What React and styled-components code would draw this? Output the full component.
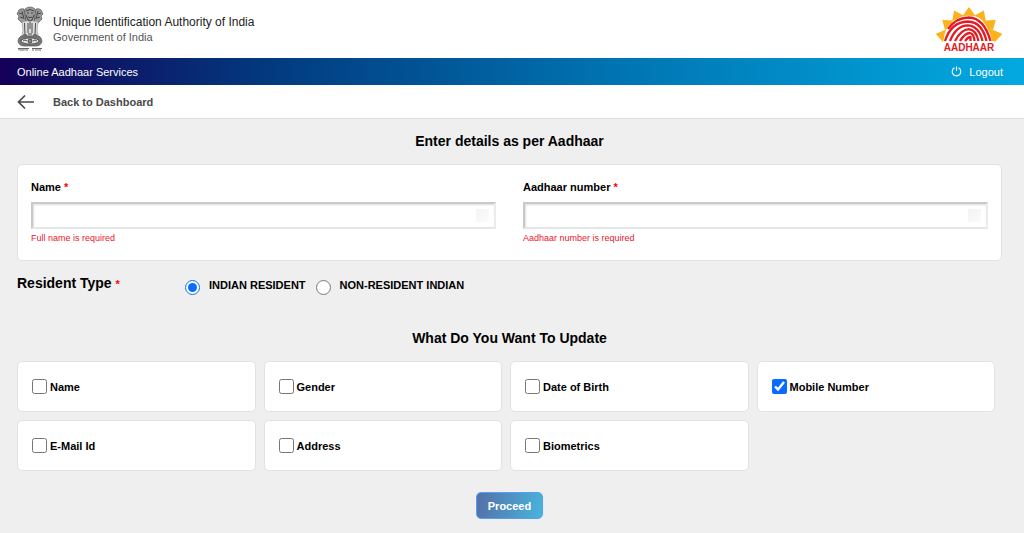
import React, { useState } from "react";
import styled, { createGlobalStyle } from "styled-components";

const updateOptions = [
  { id: "name", label: "Name" },
  { id: "gender", label: "Gender" },
  { id: "dob", label: "Date of Birth" },
  { id: "mobile", label: "Mobile Number" },
  { id: "email", label: "E-Mail Id" },
  { id: "address", label: "Address" },
  { id: "biometrics", label: "Biometrics" },
];

const residentTypes = [
  { id: "indian", label: "INDIAN RESIDENT" },
  { id: "nri", label: "NON-RESIDENT INDIAN" },
];

const rayAngles = [-78, -52, -26, 0, 26, 52, 78];

function Emblem() {
  return (
    <svg width="28" height="46" viewBox="0 0 28 46" aria-hidden="true">
      <g fill="#9a9a9a" stroke="#555" strokeWidth="0.7">
        <path d="M9 3 Q14 -1 19 3 L20 10 L18 16 L10 16 L8 10 Z" />
        <path d="M8 3 Q3 2 2 6 L1 8 L3 10 L2 13 L6 17 L10 17 L9 9 Z" />
        <path d="M20 3 Q25 2 26 6 L27 8 L25 10 L26 13 L22 17 L18 17 L19 9 Z" />
        <path d="M6 16 L10 15 H18 L22 16 L21 24 L22 30 H6 L7 24 Z" fill="#dcdcdc" stroke="#999" />
        <path d="M5 30 Q2 32 2 35 Q3 40 8 40 H20 Q25 40 26 35 Q26 32 23 30 Z" fill="#777" />
      </g>
      <g fill="none" stroke="#3a3a3a" strokeWidth="0.9">
        <path d="M10 5 Q14 2 18 5 M11 7 h2 M15 7 h2 M12 11 q2 1.500 4 0 M10 9 l2 5 l2 1 l2 -1 l2 -5" />
        <path d="M3 7 l3 1 M4 11 l3 1 M6 5 l2 8 M25 7 l-3 1 M24 11 l-3 1 M22 5 l-2 8" />
        <path d="M8.500 17 L9 29 M12 17 V27 M16 17 V27 M19.500 17 L19 29 M14 16 V23" />
        <path d="M7 29 h4 M12 28 h4 M17 29 h4" />
      </g>
      <ellipse cx="14" cy="35" rx="9" ry="3" fill="#e4e4e4" stroke="#444" strokeWidth="0.8" />
      <circle cx="14" cy="35" r="2" fill="#888" stroke="#333" strokeWidth="0.8" />
      <path d="M7 35 q2 -2 4 0 M17 35 q2 -2 4 0" fill="none" stroke="#555" />
      <path
        d="M2 42.500 H13 M16 42.500 H26 M3 43 v1.500 M5 43 v2 M7 43 v2 M9 43 v1.500 M11 43 v2 M17 43 v2 M20 43 v2 M22 43 v1.500 M24 43 v2"
        fill="none"
        stroke="#555"
        strokeWidth="0.9"
      />
    </svg>
  );
}

function AadhaarLogo() {
  return (
    <svg width="66" height="46" viewBox="0 0 66 46" role="img" aria-label="Aadhaar">
      <g fill="#fbb21b">
        {rayAngles.map((angle) => (
          <path
            key={angle}
            transform={`translate(33 35) rotate(${angle})`}
            d="M0 -34 L6.500 -25 Q0 -25.500 -6.500 -25 Z"
          />
        ))}
        <path d="M42 10 Q56 17 60 35 H56 Q53 20 42 10 Z" />
      </g>
      <g fill="none" stroke="#e31b23" strokeWidth="2.300">
        <path d="M12 23 Q20 11.500 33 11.500 Q48 12 54.500 35" />
        <path d="M9 35 Q15 16 32 15.500 Q46 16 50.500 35" />
        <path d="M14 35 Q20 19.500 32 19.300 Q43 20 46.500 35" />
        <path d="M19 35 Q25 23.500 33 23.200 Q40 24 42.500 35" />
        <path d="M24 35 Q29 27 34 27 Q38 28 38.500 35" />
        <path d="M29 35 Q32 31 34.500 31 V35" />
      </g>
      <text
        x="33"
        y="45"
        textAnchor="middle"
        fontFamily="Liberation Sans, Arial, sans-serif"
        fontSize="10"
        fontWeight="bold"
        fill="#e31b23"
      >
        AADHAAR
      </text>
    </svg>
  );
}

function BackArrow() {
  return (
    <svg width="18" height="16" viewBox="0 0 18 16" aria-hidden="true">
      <path
        d="M17 8 H1.500 M8 1.500 L1.500 8 L8 14.500"
        fill="none"
        stroke="#4a4a4a"
        strokeWidth="1.700"
      />
    </svg>
  );
}

function PowerIcon() {
  return (
    <svg width="11" height="11" viewBox="0 0 11 11" aria-hidden="true">
      <path
        d="M3.500 1.800 A4.300 4.300 0 1 0 7.500 1.800 M5.500 0.500 V5"
        fill="none"
        stroke="#fff"
        strokeWidth="1.100"
      />
    </svg>
  );
}

function TextField({ id, label, error, value, onChange }) {
  return (
    <Field>
      <FieldLabel htmlFor={id}>
        {label} <Required>*</Required>
      </FieldLabel>
      <TextInput
        id={id}
        type="text"
        value={value}
        onChange={onChange}
        aria-describedby={`${id}-error`}
      />
      <ErrorText id={`${id}-error`}>{error}</ErrorText>
    </Field>
  );
}

function App() {
  const [details, setDetails] = useState({ fullName: "", aadhaarNumber: "" });
  const [resident, setResident] = useState("indian");
  const [selected, setSelected] = useState(["mobile"]);

  const handleDetailsChange = (e) => {
    const { id, value } = e.target;
    setDetails({ ...details, [id]: value });
  };

  const toggleOption = (id) => {
    setSelected(
      selected.includes(id)
        ? selected.filter((item) => item !== id)
        : [...selected, id]
    );
  };

  const handleSubmit = (e) => {
    e.preventDefault();
  };

  return (
    <>
      <GlobalStyle />
      <Header>
        <Brand>
          <Emblem />
          <div>
            <BrandTitle>Unique Identification Authority of India</BrandTitle>
            <BrandSubtitle>Government of India</BrandSubtitle>
          </div>
        </Brand>
        <AadhaarLogo />
      </Header>
      <ServiceBar>
        <span>Online Aadhaar Services</span>
        <LogoutButton type="button">
          <PowerIcon />
          Logout
        </LogoutButton>
      </ServiceBar>
      <BackBar>
        <BackLink href="#dashboard">
          <BackArrow />
          Back to Dashboard
        </BackLink>
      </BackBar>
      <Form onSubmit={handleSubmit}>
        <Heading>Enter details as per Aadhaar</Heading>
        <DetailsCard>
          <TextField
            id="fullName"
            label="Name"
            error="Full name is required"
            value={details.fullName}
            onChange={handleDetailsChange}
          />
          <TextField
            id="aadhaarNumber"
            label="Aadhaar number"
            error="Aadhaar number is required"
            value={details.aadhaarNumber}
            onChange={handleDetailsChange}
          />
        </DetailsCard>
        <ResidentRow role="radiogroup" aria-labelledby="resident-title">
          <ResidentTitle id="resident-title">
            Resident Type <Required>*</Required>
          </ResidentTitle>
          {residentTypes.map(({ id, label }) => (
            <RadioLabel key={id}>
              <Radio
                type="radio"
                name="resident"
                checked={resident === id}
                onChange={() => setResident(id)}
              />
              {label}
            </RadioLabel>
          ))}
        </ResidentRow>
        <Heading>What Do You Want To Update</Heading>
        <OptionGrid>
          {updateOptions.map(({ id, label }) => (
            <OptionCard key={id}>
              <Checkbox
                type="checkbox"
                checked={selected.includes(id)}
                onChange={() => toggleOption(id)}
              />
              {label}
            </OptionCard>
          ))}
        </OptionGrid>
        <ProceedButton type="submit">Proceed</ProceedButton>
      </Form>
    </>
  );
}

const GlobalStyle = createGlobalStyle`
  * {
    box-sizing: border-box;
  }

  html {
    background: #efefef;
  }

  body {
    margin: 0;
    color: #000;
    font-family: "Liberation Sans", Arial, sans-serif;
    font-size: 11px;
  }

  svg {
    display: block;
    flex-shrink: 0;
  }
`;

const Header = styled.header`
  display: flex;
  align-items: center;
  justify-content: space-between;
  padding: 6px 22px 6px 16px;
  background: #fff;
`;

const Brand = styled.div`
  display: flex;
  align-items: center;
  gap: 9px;
`;

const BrandTitle = styled.div`
  font-size: 12px;
  line-height: 16px;
  color: #222;
`;

const BrandSubtitle = styled.div`
  font-size: 11px;
  line-height: 14px;
  color: #555;
`;

const ServiceBar = styled.div`
  display: flex;
  align-items: center;
  justify-content: space-between;
  padding: 0 21px 0 17px;
  min-height: 27px;
  background: linear-gradient(90deg, #140058 0%, #023b80 27%, #0074b2 60%, #02a9e0 100%);
  color: #fff;
`;

const LogoutButton = styled.button`
  display: flex;
  align-items: center;
  gap: 7px;
  padding: 0;
  border: none;
  background: transparent;
  font: inherit;
  color: #fff;
  cursor: pointer;
`;

const BackBar = styled.nav`
  display: flex;
  align-items: center;
  padding: 0 17px;
  min-height: 34px;
  background: #fff;
  border-bottom: 1px solid #dedede;
`;

const BackLink = styled.a`
  display: flex;
  align-items: center;
  gap: 18px;
  font-weight: bold;
  color: #4a4a4a;
  text-decoration: none;
`;

const Form = styled.form`
  display: flex;
  flex-direction: column;
  padding: 12px 22px 14px 17px;
`;

const Heading = styled.h2`
  margin: 0;
  font-size: 14px;
  line-height: 20px;
  text-align: center;
`;

const DetailsCard = styled.section`
  display: grid;
  grid-template-columns: 1fr 1fr;
  gap: 27px;
  margin-top: 13px;
  padding: 15px 13px 16px;
  background: #fff;
  border: 1px solid #e2e2e2;
  border-radius: 5px;
`;

const Field = styled.div`
  display: flex;
  flex-direction: column;
`;

const FieldLabel = styled.label`
  margin-bottom: 8px;
  font-weight: bold;
  line-height: 14px;
`;

const Required = styled.span`
  font-size: 11px;
  color: #f00;
`;

const TextInput = styled.input`
  width: 100%;
  height: 27px;
  padding: 0 22px 0 6px;
  border: 2px solid;
  border-color: #c9c9c9 #ebebeb #e6e6e6 #c9c9c9;
  border-radius: 0;
  background: #fff linear-gradient(135deg, #f2f3f3, #fbfbfb) no-repeat right 5px center / 13px 13px;
  box-shadow: inset 1px 1px 2px #ddd;
  font: inherit;
`;

const ErrorText = styled.div`
  margin-top: 3px;
  font-size: 9px;
  line-height: 12px;
  color: #f0142d;
`;

const ResidentRow = styled.div`
  display: flex;
  align-items: flex-start;
  gap: 10px;
  margin: 12px 0 33px;
`;

const ResidentTitle = styled.h3`
  width: 158px;
  margin: 0;
  font-size: 14px;
  line-height: 20px;
`;

const RadioLabel = styled.label`
  display: flex;
  align-items: flex-start;
  gap: 9px;
  padding-top: 5px;
  font-weight: bold;
  line-height: 14px;
`;

const Radio = styled.input`
  width: 15px;
  height: 15px;
  margin: 2px 0 0;
  accent-color: #0a6cff;
`;

const OptionGrid = styled.div`
  display: grid;
  grid-template-columns: repeat(4, 1fr);
  gap: 8px;
  margin: 13px 7px 0 0;
`;

const OptionCard = styled.label`
  display: flex;
  align-items: center;
  gap: 3px;
  padding: 0 14px;
  min-height: 51px;
  background: #fff;
  border: 1px solid #e2e2e2;
  border-radius: 5px;
  font-weight: bold;
`;

const Checkbox = styled.input`
  width: 15px;
  height: 15px;
  margin: 0;
  accent-color: #0a6cff;
`;

const ProceedButton = styled.button`
  align-self: center;
  margin-top: 21px;
  padding: 0 11px;
  height: 27px;
  border: 1px solid #55a0f5;
  border-radius: 5px;
  background: linear-gradient(100deg, #556fa8, #48b4dc);
  font: inherit;
  font-weight: bold;
  color: #fff;
  cursor: pointer;
`;

export default App;
